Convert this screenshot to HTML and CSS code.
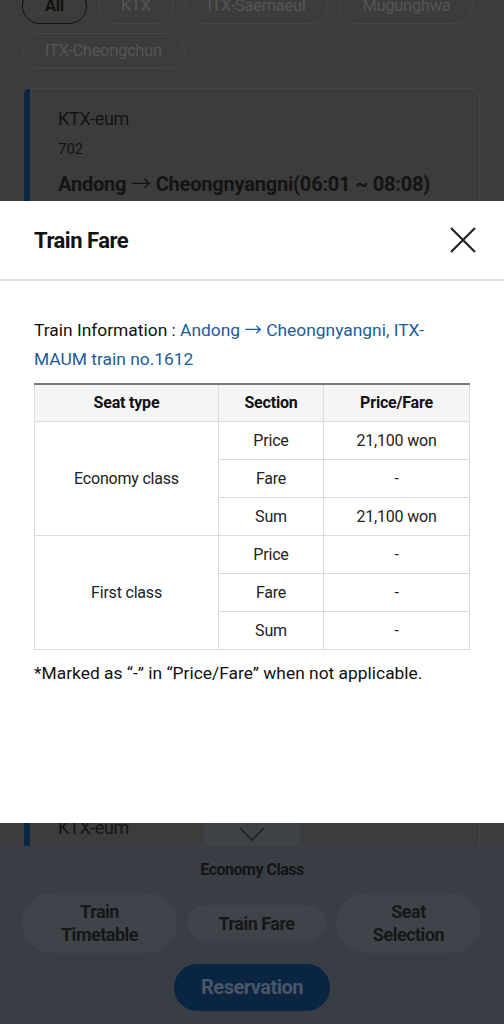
FILE: index.html
```html
<!DOCTYPE html>
<html>
<head lang="en">
    <meta charset="UTF-8">
    <title>Train Fare</title>
    <link rel="stylesheet" href="styles.css">
</head>
<body>
<div class="page">
    <ul class="chips">
        <li class="chip on">All</li>
        <li class="chip">KTX</li>
        <li class="chip">ITX-Saemaeul</li>
        <li class="chip">Mugunghwa</li>
        <li class="chip">ITX-Cheongchun</li>
    </ul>
    <div class="list">
        <div class="card">
            <div class="kind">KTX-eum</div>
            <div class="no">702</div>
            <div class="route">Andong <span class="arrow">→</span> Cheongnyangni(06:01 ~ 08:08)</div>
        </div>
        <div class="card last">
            <div class="kind">KTX-eum</div>
        </div>
    </div>
    <div class="sheet">
        <div class="handle">
            <svg width="28" height="16" viewBox="0 0 28 16">
                <path d="M2 2 L14 14 L26 2" fill="none" stroke="#222" stroke-width="1.6"/>
            </svg>
        </div>
        <div class="grade">Economy Class</div>
        <div class="btns">
            <a class="btn tall b1">Train<br>Timetable</a>
            <a class="btn b2">Train Fare</a>
            <a class="btn tall b3">Seat<br>Selection</a>
        </div>
        <a class="reserve">Reservation</a>
    </div>
</div>

<!-- 운임 팝업 -->
<div class="modal">
    <div class="modal-head">
        <h2>Train Fare</h2>
        <a class="close">
            <svg width="28" height="28" viewBox="0 0 28 28">
                <path d="M2 2 L26 26 M26 2 L2 26" stroke="#222" stroke-width="2.2" fill="none"/>
            </svg>
        </a>
    </div>
    <div class="modal-body">
        <p class="info">Train Information : <span>Andong <span class="arrow">→</span> Cheongnyangni, ITX-MAUM train no.1612</span></p>
        <table class="fare">
            <tr>
                <th class="c1">Seat type</th>
                <th class="c2">Section</th>
                <th>Price/Fare</th>
            </tr>
            <tr>
                <td rowspan="3">Economy class</td>
                <td>Price</td>
                <td>21,100 won</td>
            </tr>
            <tr>
                <td>Fare</td>
                <td>-</td>
            </tr>
            <tr>
                <td>Sum</td>
                <td>21,100 won</td>
            </tr>
            <tr>
                <td rowspan="3">First class</td>
                <td>Price</td>
                <td>-</td>
            </tr>
            <tr>
                <td>Fare</td>
                <td>-</td>
            </tr>
            <tr>
                <td>Sum</td>
                <td>-</td>
            </tr>
        </table>
        <p class="note">*Marked as “-” in “Price/Fare” when not applicable.</p>
    </div>
</div>
</body>
</html>
```

FILE: styles.css
```css
* {
    margin: 0;
    padding: 0;
    box-sizing: border-box;
}

body {
    font-family: Roboto, "Noto Sans", "Liberation Sans", sans-serif;
    background-color: #3c3c3c;
    color: #141414;
    overflow: hidden;
}

ul {
    list-style: none;
}

a {
    text-decoration: none;
}

.arrow {
    font-family: "Noto Sans CJK KR", sans-serif;
    font-weight: normal;
}

.page {
    height: 1024px;
    display: flex;
    flex-direction: column;
}

/* 차종 필터 */
.chips {
    display: flex;
    flex-wrap: wrap;
    gap: 9px 11px;
    margin-top: -12px;
    padding: 0 22px;
}

.chip {
    height: 36px;
    line-height: 34px;
    padding: 0 22px;
    border: 1px solid #464646;
    border-radius: 18px;
    font-size: 16.5px;
    letter-spacing: -0.3px;
    color: #555;
}

.chip.on {
    border: 1.5px solid #121212;
    color: #121212;
    font-weight: bold;
}

.list {
    flex: 1;
    display: flex;
    flex-direction: column;
    justify-content: space-between;
    overflow: hidden;
    padding: 19px 24px 0;
}

.card {
    border: 1px solid #454545;
    border-left: 6px solid #0b2640;
    border-radius: 6px;
    padding: 18px 28px 20px;
}

.card.last {
    border-bottom: none;
    border-radius: 6px 6px 0 0;
    padding: 0 28px 6px;
}

.kind {
    font-size: 18px;
    line-height: 24px;
    letter-spacing: -0.3px;
}

.no {
    margin-top: 6px;
    font-size: 15px;
    line-height: 24px;
}

.route {
    margin-top: 9px;
    font-size: 20px;
    line-height: 26px;
    font-weight: bold;
    letter-spacing: -0.2px;
}

/* 하단 시트 */
.sheet {
    background-color: #393d45;
    padding-bottom: 13px;
    text-align: center;
}

.handle {
    width: 96px;
    height: 24px;
    margin: -24px auto 0;
    background-color: #3f4247;
    display: flex;
    align-items: center;
    justify-content: center;
}

.grade {
    margin-top: 13px;
    font-size: 16px;
    line-height: 22px;
    font-weight: bold;
    letter-spacing: -0.5px;
}

.btns {
    display: flex;
    align-items: center;
    gap: 10px;
    padding: 12px 22px 0;
}

.btn {
    height: 36px;
    border-radius: 30px;
    background-color: #3f434a;
    color: #171717;
    font-size: 18px;
    font-weight: bold;
    letter-spacing: -0.5px;
    line-height: 23px;
    display: flex;
    align-items: center;
    justify-content: center;
}

.btn.tall {
    height: 60px;
}

.b1 {
    width: 155px;
}

.b2 {
    width: 139px;
}

.b3 {
    width: 145px;
}

.reserve {
    display: inline-block;
    margin-top: 11px;
    width: 156px;
    height: 47px;
    line-height: 47px;
    border-radius: 24px;
    background-color: #0a2542;
    color: #4b5667;
    font-size: 20px;
    font-weight: bold;
    letter-spacing: -0.5px;
}

/* 팝업 */
.modal {
    position: absolute;
    top: 201px;
    left: 0;
    right: 0;
    height: 622px;
    background-color: #fff;
}

.modal-head {
    height: 80px;
    display: flex;
    align-items: center;
    justify-content: space-between;
    padding: 0 27px 0 34px;
    border-bottom: 2px solid #dedede;
}

.modal-head h2 {
    font-size: 22px;
    letter-spacing: -0.5px;
    color: #111;
}

.close {
    display: flex;
}

.modal-body {
    padding: 33px 34px 0;
}

.info {
    font-size: 17.4px;
    line-height: 29px;
    color: #111;
}

.info span {
    color: #1c5d9b;
}

.fare {
    width: 100%;
    margin-top: 9px;
    border-collapse: collapse;
    border-top: 2px solid #7a7a7a;
    font-size: 16px;
    letter-spacing: -0.2px;
    color: #222;
}

.fare th,
.fare td {
    height: 38px;
    border: 1px solid #dcdcdc;
    text-align: center;
    font-weight: normal;
}

.fare th {
    height: 37px;
    background-color: #f5f5f5;
    font-weight: bold;
    color: #111;
}

.c1 {
    width: 184px;
}

.c2 {
    width: 105px;
}

.note {
    margin-top: 9px;
    font-size: 17.4px;
    line-height: 29px;
    color: #111;
}
```
